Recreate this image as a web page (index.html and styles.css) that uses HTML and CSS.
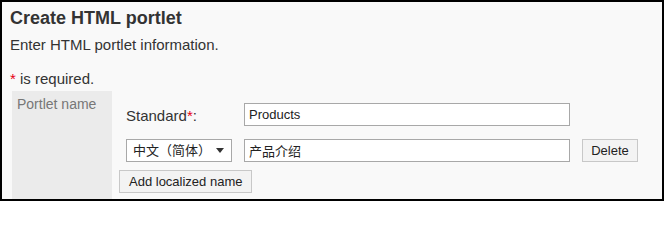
FILE: index.html
```html
<!DOCTYPE html>
<html lang="en">
<head>
<meta charset="utf-8">
<title>Create HTML portlet</title>
<link rel="stylesheet" href="styles.css">
</head>
<body>
<div class="frame">
  <h1 class="title">Create HTML portlet</h1>
  <p class="desc">Enter HTML portlet information.</p>
  <p class="required"><span class="req">*</span> is required.</p>
  <div class="form">
    <div class="form-label">Portlet name</div>
    <div class="form-value">
      <div class="row">
        <label class="row-label">Standard<span class="req">*</span>:</label>
        <input class="text-input" type="text" value="Products">
      </div>
      <div class="row row-second">
        <span class="select-wrap">
          <select class="lang-select">
            <option>中文（简体）</option>
          </select>
        </span>
        <input class="text-input" type="text" value="产品介绍">
        <button class="btn btn-delete" type="button">Delete</button>
      </div>
      <button class="btn btn-add" type="button">Add localized name</button>
    </div>
  </div>
</div>
</body>
</html>
```
FILE: styles.css
```css
html, body {
  margin: 0;
  padding: 0;
}

body {
  font-family: "Liberation Sans", Arial, "Noto Sans CJK SC", sans-serif;
  color: #333;
  background: #fff;
}

.frame {
  width: 664px;
  height: 201px;
  box-sizing: border-box;
  border: 2px solid #000;
  background: #f9f9f9;
  padding: 6px 8px 0;
  overflow: hidden;
}

.title {
  margin: 0;
  font-size: 18px;
  line-height: 21px;
  font-weight: bold;
  color: #333;
}

.desc {
  margin: 7px 0 0;
  font-size: 15px;
  line-height: 17px;
}

.required {
  margin: 17px 0 0;
  font-size: 15px;
  line-height: 17px;
}

.req {
  color: #e60012;
}

.form {
  display: flex;
  margin: 4px 0 0 2px;
}

.form-label {
  width: 100px;
  box-sizing: border-box;
  flex: none;
  background: #ebebeb;
  color: #777;
  font-size: 14px;
  line-height: 16px;
  padding: 5px 5px 0;
}

.form-value {
  flex: 1;
  padding: 12px 0 10px 7px;
  display: flex;
  flex-direction: column;
  align-items: flex-start;
}

.row {
  display: flex;
  align-items: center;
  margin-left: 7px;
  height: 23px;
}

.row-second {
  margin-top: 13px;
}

.row-label {
  width: 118px;
  flex: none;
  font-size: 15px;
  line-height: 17px;
  padding-top: 2px;
  color: #333;
}

.text-input {
  width: 326px;
  height: 23px;
  box-sizing: border-box;
  border: 1px solid #a8a8a8;
  background: #fff;
  padding: 0 4px;
  margin: 0;
  font-family: "Liberation Sans", Arial, "Noto Sans CJK SC", sans-serif;
  font-size: 13px;
  color: #222;
  outline: none;
}

.select-wrap {
  position: relative;
  display: block;
  margin-right: 12px;
}

.lang-select {
  display: block;
  width: 106px;
  height: 23px;
  box-sizing: border-box;
  border: 1px solid #a8a8a8;
  border-radius: 0;
  background: #fff;
  padding: 0 0 0 6px;
  margin: 0;
  font-family: "Liberation Sans", Arial, "Noto Sans CJK SC", sans-serif;
  font-size: 13px;
  color: #222;
  -webkit-appearance: none;
  appearance: none;
  outline: none;
}

.select-wrap::after {
  content: "";
  position: absolute;
  right: 8px;
  top: 9px;
  width: 0;
  height: 0;
  border-left: 4px solid transparent;
  border-right: 4px solid transparent;
  border-top: 5px solid #333;
  pointer-events: none;
}

.btn {
  height: 23px;
  box-sizing: border-box;
  border: 1px solid #c8c8c8;
  border-radius: 0;
  background: #f3f3f3;
  color: #222;
  font-family: "Liberation Sans", Arial, "Noto Sans CJK SC", sans-serif;
  font-size: 13px;
  line-height: 21px;
  margin: 0;
  cursor: pointer;
}

.btn-delete {
  width: 56px;
  padding: 0;
  margin-left: 12px;
}

.btn-add {
  margin-top: 8px;
  padding: 0 9px;
}
```
